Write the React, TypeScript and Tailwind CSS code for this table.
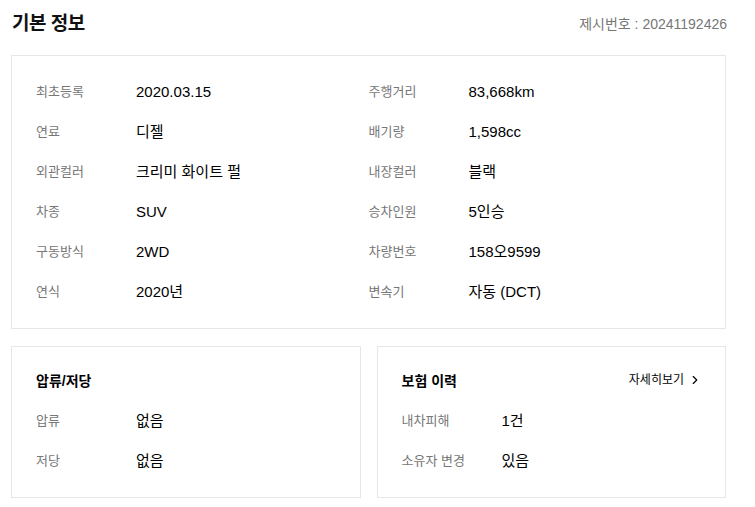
import React from 'react';
import { ChevronRight } from 'lucide-react';

type Item = { label: string; value: string };

const basicInfo: Item[] = [
    { label: '최초등록', value: '2020.03.15' },
    { label: '주행거리', value: '83,668km' },
    { label: '연료', value: '디젤' },
    { label: '배기량', value: '1,598cc' },
    { label: '외관컬러', value: '크리미 화이트 펄' },
    { label: '내장컬러', value: '블랙' },
    { label: '차종', value: 'SUV' },
    { label: '승차인원', value: '5인승' },
    { label: '구동방식', value: '2WD' },
    { label: '차량번호', value: '158오9599' },
    { label: '연식', value: '2020년' },
    { label: '변속기', value: '자동 (DCT)' },
];

const seizure: Item[] = [
    { label: '압류', value: '없음' },
    { label: '저당', value: '없음' },
];

const insurance: Item[] = [
    { label: '내차피해', value: '1건' },
    { label: '소유자 변경', value: '있음' },
];

const Row = ({ label, value }: Item) => (
    <div className="flex items-center h-10">
        <span className="w-[100px] shrink-0 text-[13px] text-[#777]">{label}</span>
        <span className="text-[15px] text-black">{value}</span>
    </div>
);

export default function App() {
    return (
        <div
            className="w-[755px] h-[507px] bg-white pl-[11px] pt-[11px]"
            style={{ fontFamily: '"Liberation Sans", "Noto Sans CJK KR", sans-serif' }}
        >
            <div className="w-[715px]">
                {/* Header */}
                <div className="flex items-center justify-between h-[26px]">
                    <h1 className="pl-[1px] text-[19px] font-bold text-[#111] -tracking-[0.5px]">기본 정보</h1>
                    <span className="text-[14px] text-[#777] -mr-[1px]">제시번호 : 20241192426</span>
                </div>

                {/* Basic info */}
                <div className="mt-[18px] border border-[#e6e6e6] px-6 py-4 grid grid-cols-2">
                    {basicInfo.map((item) => (
                        <Row key={item.label} {...item} />
                    ))}
                </div>

                {/* Bottom cards */}
                <div className="mt-[17px] grid grid-cols-2 gap-4">
                    <div className="border border-[#e6e6e6] px-6 pt-[14px] pb-4">
                        <h3 className="h-10 flex items-center text-[14px] font-bold text-black">압류/저당</h3>
                        {seizure.map((item) => (
                            <Row key={item.label} {...item} />
                        ))}
                    </div>
                    <div className="border border-[#e6e6e6] px-6 pt-[14px] pb-4">
                        <div className="h-10 flex items-center justify-between">
                            <h3 className="text-[14px] font-bold text-black">보험 이력</h3>
                            <button className="flex items-center gap-[4px] text-[12px] text-black -mr-[1px] -mt-[2px]">
                                자세히보기 <ChevronRight size={14} strokeWidth={2} />
                            </button>
                        </div>
                        {insurance.map((item) => (
                            <Row key={item.label} {...item} />
                        ))}
                    </div>
                </div>
            </div>
        </div>
    );
}
